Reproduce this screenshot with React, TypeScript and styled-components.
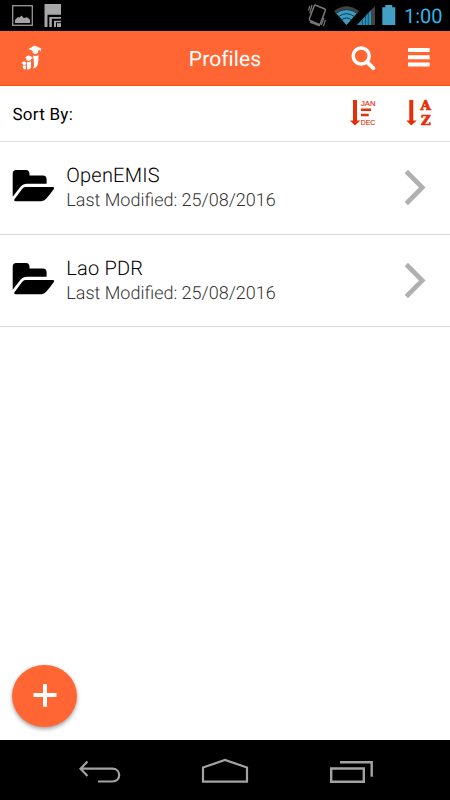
import React from 'react';
import styled, { createGlobalStyle } from 'styled-components';

const GlobalStyle = createGlobalStyle`
  *, *::before, *::after { box-sizing: border-box; }
  body { margin: 0; background: #fff; font-family: Roboto, "Liberation Sans", sans-serif; text-rendering: geometricPrecision; }
  svg { display: block; flex: none; }
  button { border: 0; padding: 0; background: none; font: inherit; color: inherit; }
`;

const Screen = styled.div`
  width: 450px;
  height: 800px;
  display: flex;
  flex-direction: column;
  overflow: hidden;
`;

const StatusBar = styled.div`
  height: 31px;
  flex: none;
  display: flex;
  justify-content: space-between;
  background: #000;
`;

const StatusGroup = styled.div`
  display: flex;
`;

const Clock = styled.span`
  width: 46px;
  font-size: 20px;
  line-height: 32px;
  letter-spacing: 0;
  color: #33b5e5;
`;

const Header = styled.header`
  height: 55px;
  flex: none;
  display: grid;
  grid-template-columns: 100px 1fr 100px;
  align-items: center;
  background: #ff6633;
  border-bottom: 1px solid #ff5500;
`;

const Title = styled.h1`
  margin: 0;
  padding-top: 4px;
  text-align: center;
  color: #fff;
  font-size: 21px;
  font-weight: 400;
  line-height: 24px;
  letter-spacing: 0.1px;
`;

const HeaderActions = styled.div`
  display: flex;
`;

const SortBar = styled.div`
  height: 56px;
  flex: none;
  display: flex;
  align-items: center;
  justify-content: space-between;
  padding-left: 12.5px;
  border-bottom: 1px solid #dedede;
  background: #fff;
`;

const SortLabel = styled.span`
  padding-top: 3px;
  color: #000;
  font-size: 17px;
  line-height: 20px;
  letter-spacing: 0.25px;
`;

const SortActions = styled.div`
  display: flex;
`;

const Content = styled.main`
  flex: 1;
  display: flex;
  flex-direction: column;
  background: #fff;
`;

const ProfileRow = styled.div<{ $height: number }>`
  height: ${(p) => p.$height}px;
  display: flex;
  align-items: flex-start;
  border-bottom: 1px solid #d6d6d6;
`;

const ProfileText = styled.div`
  flex: 1;
  padding: 20px 0 0 6.3px;
`;

const ProfileName = styled.div`
  color: #000;
  font-size: 20px;
  font-weight: 300;
  line-height: 26px;
  letter-spacing: 0.2px;
`;

const ProfileDate = styled.div`
  color: #333;
  font-size: 18px;
  font-weight: 300;
  line-height: 26px;
  letter-spacing: 0;
`;

const AddButton = styled.button`
  width: 65px;
  height: 62px;
  margin: auto 0 13px 12.4px;
  display: grid;
  place-items: center;
  border-radius: 50%;
  background: #ff6633;
  box-shadow: 0 2px 4px rgba(0, 0, 0, 0.38);
`;

const NavBar = styled.nav`
  height: 60px;
  flex: none;
  display: flex;
  justify-content: center;
  background: #000;
`;

const StatusLeft = () => (
  <svg width="70" height="31" viewBox="0 0 70 31">
    <rect x="12.700" y="5.700" width="19.600" height="19.600" fill="none" stroke="#999" strokeWidth="1.300" />
    <path d="M15 23v-3l3-3 1.500.5 2-2 2.500 2.800 2-1 2 .5 2 2.200v3z" fill="#a5a5a5" />
    <path d="M44.500 4H61v10.800H47.500V27h-3z M49.300 17H61v1.800h-9.200V27h-2.500z M54 20.800h7v1.500h-5V27h-2z" fill="#a8a8a8" />
    <rect x="57" y="23.200" width="4" height="3.800" fill="#a8a8a8" />
  </svg>
);

const StatusRight = () => (
  <svg width="104" height="31" viewBox="300 0 104 31">
    <g fill="none" stroke="#777" strokeWidth="1.200">
      <path d="M315.800 5.200l9 3.800q.8.400.5 1.400l-4.800 12.800q-.5 1.500-2 1l-8.500-3.800q-1-.5-.6-1.700l4.800-12.600q.5-1.400 1.600-.9z" strokeWidth="1.500" />
      <path d="M310 21.800l10 3.800" strokeWidth="2" />
      <path d="M309.800 6l-1.300 4.500M312 5l-2.200 8.500M324 18l-2.800 7M325.400 20l-2 6" />
    </g>
    <path d="M334 11Q346.500 1.500 359 11L346.500 25z" fill="#424242" />
    <path d="M336 12.800Q346.500 6 357 12.800L346.500 25z" fill="#3a9cc2" />
    <g fill="none" stroke="#123644" strokeWidth="1">
      <path d="M335.500 13.500Q346.500 5.500 357.500 13.500M338.300 16.800Q346.500 10.500 354.700 16.800M341.300 20Q346.500 16 351.700 20" />
    </g>
    <path d="M357 25L375 6v19z" fill="#444" />
    <path d="M357 25L371 10.300V25z" fill="#2591b8" />
    <path d="M362.400 19.500V25M365.500 16V25M368.300 13V25" stroke="#16495c" strokeWidth=".8" />
    <path d="M382.300 7.300h3V5h7v2.300h3V25h-13z" fill="#439fc3" />
  </svg>
);

const LogoIcon = () => (
  <svg width="100" height="54" viewBox="0 31 100 54" fill="#fff">
    <path d="M28.500 49l6-3.400 6.700 3-.7 3.400-.7-2-2 1 .4 1.500-2.200 1.600h-1.500l-2-1.500.3-1.500z" />
    <path d="M33 55.500q2.700 1 5.500-.5 0 6-.5 8.800-1 4.200-5 4.700 1.500-2 1-5-.2-5-1-8z" />
    <path d="M25 57.500l3.500-2.300 4 2-.3 2-1-.8-.5 1.800-2.500.7-1.800-.8v-1.700z" />
    <path d="M27 61.700q1.800.7 4-.4v6q-.5 2.400-3.600 2.500-.7-2-.4-8.100z" />
    <path d="M21.500 62.800l2.300-1.500 2.500 1.300v1l-1 1.500-2 .2-.8-1.800z" />
    <path d="M22.600 65.700l3.200-.2v3.700l-1.800.1q-1.300-1.100-1.400-3.600z" />
  </svg>
);

const SearchIcon = () => (
  <svg width="50" height="54" viewBox="350 31 50 54">
    <circle cx="361.200" cy="56" r="8" fill="none" stroke="#fff" strokeWidth="3.500" />
    <path d="M367 62l6.300 6.100" stroke="#fff" strokeWidth="4" strokeLinecap="round" />
  </svg>
);

const MenuIcon = () => (
  <svg width="50" height="54" viewBox="400 31 50 54" fill="#fff">
    <rect x="408" y="48" width="21.700" height="4" rx=".4" />
    <rect x="408" y="55.200" width="21.700" height="4" rx=".4" />
    <rect x="408" y="62.500" width="21.700" height="4" rx=".4" />
  </svg>
);

const IconText = styled.text<{ $serif?: boolean }>`
  font-family: ${(p) => (p.$serif ? '"DejaVu Serif", serif' : '"Liberation Sans", sans-serif')};
  font-weight: ${(p) => (p.$serif ? 700 : 400)};
  font-size: ${(p) => (p.$serif ? 12.3 : 8)}px;
  stroke: #e62e08;
  stroke-width: ${(p) => (p.$serif ? 0.7 : 0.15)}px;
`;

const DateSortIcon = () => (
  <svg width="54" height="55" viewBox="346 86 54 55" fill="#e62e08">
    <path d="M353 100h4v20.500h3.300L355 125.500l-5.100-5H353z" />
    <IconText x="361" y="106" textLength="14.500" lengthAdjust="spacingAndGlyphs">JAN</IconText>
    <path d="M361 108.500h10v2.500h-10zM361 113.700h7.700v2.500H361z" />
    <IconText x="360.700" y="125" textLength="14.500" lengthAdjust="spacingAndGlyphs">DEC</IconText>
  </svg>
);

const AlphaSortIcon = () => (
  <svg width="50" height="55" viewBox="400 86 50 55" fill="#e62e08">
    <path d="M409.300 100h4v20.500h3.400L411.300 125.500l-5-5h3z" />
    <IconText $serif x="420.500" y="110.200" textLength="10.300" lengthAdjust="spacingAndGlyphs">A</IconText>
    <IconText $serif x="421" y="124.900" textLength="9.700" lengthAdjust="spacingAndGlyphs">Z</IconText>
  </svg>
);

const FolderIcon = () => (
  <svg width="60" height="91" viewBox="0 142 60 91">
    <path d="M12.700 196.800V173.500q0-3.500 3.500-3.500h10q3 0 3.300 3.500v1.900H43q3.600 0 3.600 3.800v4.600H27q-4 0-6.500 3z" />
    <path d="M25 187h28q1.600.2 1 1.700-3.800 5.500-7.800 10-2 2.300-5 2.500H15.500q-2-.2-1.200-1.800l7.600-10.200q1.300-2 3.100-2.200z" />
  </svg>
);

const ChevronIcon = () => (
  <svg width="60" height="91" viewBox="390 142 60 91">
    <path d="M406.300 171.500l16 16-16 16" fill="none" stroke="#b0b0b0" strokeWidth="4.600" />
  </svg>
);

const PlusIcon = () => (
  <svg width="24" height="24" viewBox="33 684 24 24">
    <path d="M33.500 695h23M45 683.300v23.400" stroke="#fff" strokeWidth="4" />
  </svg>
);

const NavIcons = () => (
  <svg width="450" height="60" viewBox="0 740 450 60" fill="none" stroke="#a3a3a3" strokeWidth="2.200">
    <path d="M87.500 761.500l-7 7.200 7 7.200M80.500 768.700h31.800c9.200 0 9.200 12.800 0 12.800H98" />
    <path d="M203 767.500l22-7.500 22 7.500v14.200h-44z" />
    <path d="M331.200 768.500h32.600v13.200h-32.600zM340 762.300h31.700v14.500" strokeWidth="2.400" />
  </svg>
);

const profiles = [
  { name: 'OpenEMIS', modified: '25/08/2016', height: 93 },
  { name: 'Lao PDR', modified: '25/08/2016', height: 92 },
];

export default function App() {
  return (
    <>
      <GlobalStyle />
      <Screen>
        <StatusBar>
          <StatusLeft />
          <StatusGroup>
            <StatusRight />
            <Clock>1:00</Clock>
          </StatusGroup>
        </StatusBar>
        <Header>
          <LogoIcon />
          <Title>Profiles</Title>
          <HeaderActions>
            <button aria-label="Search"><SearchIcon /></button>
            <button aria-label="Menu"><MenuIcon /></button>
          </HeaderActions>
        </Header>
        <SortBar>
          <SortLabel>Sort By:</SortLabel>
          <SortActions>
            <button aria-label="Sort by date"><DateSortIcon /></button>
            <button aria-label="Sort by name"><AlphaSortIcon /></button>
          </SortActions>
        </SortBar>
        <Content>
          {profiles.map((p) => (
            <ProfileRow key={p.name} $height={p.height}>
              <FolderIcon />
              <ProfileText>
                <ProfileName>{p.name}</ProfileName>
                <ProfileDate>Last Modified: {p.modified}</ProfileDate>
              </ProfileText>
              <ChevronIcon />
            </ProfileRow>
          ))}
          <AddButton aria-label="Add profile"><PlusIcon /></AddButton>
        </Content>
        <NavBar>
          <NavIcons />
        </NavBar>
      </Screen>
    </>
  );
}
